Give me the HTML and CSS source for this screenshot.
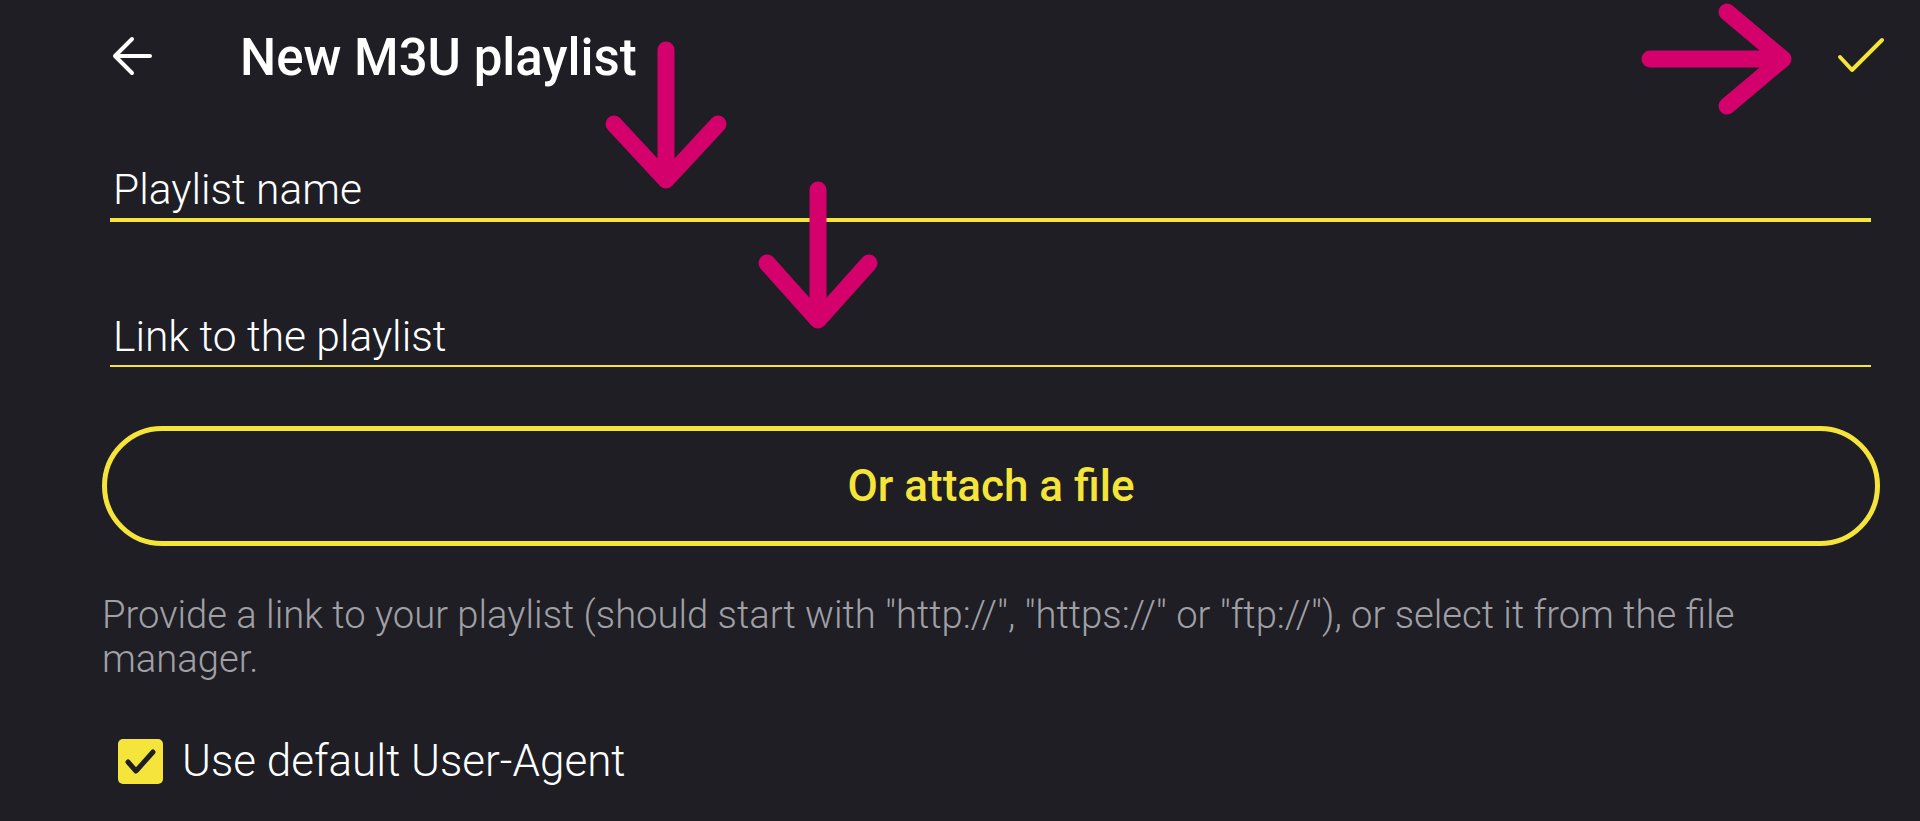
FILE: index.html
```html
<!DOCTYPE html>
<html lang="en">
<head>
  <meta charset="UTF-8" />
  <title>New M3U playlist</title>
  <meta name="viewport" content="width=device-width, initial-scale=1.0"/>
  <link rel="stylesheet" href="styles.css">
</head>
<body>

  <div class="screen">

    <!-- Top bar -->
    <header class="topbar">
      <button class="icon-btn back" aria-label="Back">
        <svg width="40" height="40" viewBox="0 0 40 40">
          <path d="M38 20H3M20 3L3 20L20 37" fill="none" stroke="#fff" stroke-width="4" stroke-linecap="round" stroke-linejoin="round"/>
        </svg>
      </button>
      <h1 class="title">New M3U playlist</h1>
      <button class="icon-btn confirm" aria-label="Save">
        <svg width="48" height="48" viewBox="0 0 48 48">
          <path d="M3 25L15 38L45 8" fill="none" stroke="#f5e43a" stroke-width="4" stroke-linecap="round" stroke-linejoin="round"/>
        </svg>
      </button>
    </header>

    <!-- Form -->
    <form class="form" onsubmit="return false">
      <div class="field active">
        <input type="text" placeholder="Playlist name" />
      </div>
      <div class="field link">
        <input type="url" placeholder="Link to the playlist" />
      </div>

      <button type="button" class="attach-btn">Or attach a file</button>

      <p class="hint">Provide a link to your playlist (should start with "http://", "https://" or "ftp://"), or select it from the file manager.</p>

      <label class="check-row">
        <span class="check-box">
          <svg width="45" height="45" viewBox="0 0 45 45">
            <path d="M10 23L18 32L35 13" fill="none" stroke="#1e1e24" stroke-width="5" stroke-linecap="round" stroke-linejoin="round"/>
          </svg>
        </span>
        Use default User-Agent
      </label>
    </form>

    <!-- Annotation arrows -->
    <svg class="marks" width="1920" height="821" viewBox="0 0 1920 821">
      <g fill="none" stroke="#d4006c" stroke-width="17" stroke-linecap="round" stroke-linejoin="round">
        <path d="M666 50V180M614 124L666 180L718 124"/>
        <path d="M818 190V320M767 263L818 320L869 263"/>
        <path d="M1650 59H1783M1727 12L1783 59L1727 106"/>
      </g>
    </svg>

  </div>

</body>
</html>
```

FILE: styles.css
```css
* { box-sizing: border-box; }
body {
  margin: 0;
  background: #1e1e24;
  font-family: Roboto, 'Liberation Sans', sans-serif;
  color: #fff;
}
.screen {
  position: relative;
  width: 1920px;
  height: 821px;
  overflow: hidden;
}

/* Top bar */
.topbar {
  display: flex;
  align-items: center;
  height: 112px;
  padding: 0 35px 0 112px;
}
.icon-btn {
  background: none;
  border: none;
  padding: 0;
  display: flex;
  cursor: pointer;
}
.title {
  margin: 3px 0 0 88px;
  font-size: 51px;
  font-weight: 500;
  flex: 1;
}

/* Form */
.form {
  padding: 0 40px 0 102px;
}
.field {
  margin: 53px 9px 0 8px;
  padding-bottom: 5px;
  border-bottom: 4px solid #f5e43a;
}
.field.link {
  margin-top: 90px;
  border-bottom-width: 2px;
}
.field input {
  display: block;
  width: 100%;
  height: 48px;
  padding: 0 0 0 3px;
  background: none;
  border: none;
  outline: none;
  font-family: inherit;
  font-size: 42.5px;
  font-weight: 300;
  color: #fff;
}
.field input::placeholder {
  color: #fff;
  opacity: 1;
}

.attach-btn {
  display: block;
  width: 100%;
  height: 120px;
  margin-top: 59px;
  background: none;
  border: 5px solid #f5e43a;
  border-radius: 60px;
  font-family: inherit;
  font-size: 44px;
  font-weight: 500;
  color: #f5e43a;
  cursor: pointer;
}

.hint {
  max-width: 1720px;
  margin: 47px 0 0;
  font-size: 38.2px;
  font-weight: 300;
  line-height: 44px;
  color: #a0a0a6;
}

.check-row {
  display: flex;
  align-items: center;
  gap: 19px;
  margin: 54px 0 0 16px;
  font-size: 44px;
  font-weight: 300;
  cursor: pointer;
}
.check-box {
  display: flex;
  width: 45px;
  height: 45px;
  background: #f5e43a;
  border-radius: 5px;
}

/* Annotations drawn over the screen */
.marks {
  position: absolute;
  top: 0;
  left: 0;
  pointer-events: none;
}
```
